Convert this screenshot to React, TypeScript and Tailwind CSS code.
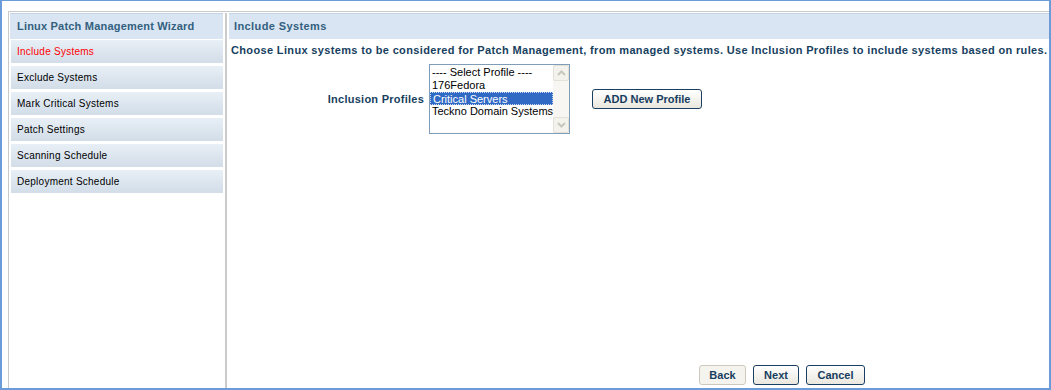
const FONT = { fontFamily: '"Liberation Sans", Arial, sans-serif' };

const STEPS = [
  "Include Systems",
  "Exclude Systems",
  "Mark Critical Systems",
  "Patch Settings",
  "Scanning Schedule",
  "Deployment Schedule",
];

const PROFILES = [
  "---- Select Profile ----",
  "176Fedora",
  "Critical Servers",
  "Teckno Domain Systems",
];

const Arrow = ({ up }: { up?: boolean }) => (
  <div className="flex h-[16px] w-[16px] items-center justify-center rounded-[2px] border border-[#e3e1d8] bg-[#f3f2ec]">
    <svg width="9" height="6" viewBox="0 0 9 6">
      <path
        d={up ? "M1 5 L4.5 1.5 L8 5" : "M1 1 L4.5 4.5 L8 1"}
        fill="none"
        stroke="#c9c7bd"
        strokeWidth="2"
      />
    </svg>
  </div>
);

const WizardButton = ({
  label,
  width,
  muted = false,
}: {
  label: string;
  width: string;
  muted?: boolean;
}) => (
  <button
    className={`flex h-[20px] items-center justify-center rounded-[3px] border text-[11px] font-bold leading-none text-[#163d5e] ${width} ${
      muted
        ? "border-[#cdcabd] bg-[#f4f3ee]"
        : "border-[#1b3f63] bg-gradient-to-b from-white to-[#e9e7de]"
    }`}
  >
    {label}
  </button>
);

const App = () => {
  return (
    <div
      style={FONT}
      className="h-[390px] w-[1051px] border-t border-r-2 border-b-2 border-l-2 border-[#6b9bd8] bg-white pt-[10px] pl-[6px]"
    >
      <div className="flex h-full border-t border-l border-[#c9c9c9] pt-[1px] pl-[1px]">
        {/* wizard steps */}
        <aside className="flex w-[213px] flex-col">
          <div className="flex h-[26px] items-center border-t border-[#c3d3e5] bg-[#d9e5f2] pl-[7px] text-[11px] font-bold tracking-[0.2px] text-[#33607f]">
            Linux Patch Management Wizard
          </div>
          <div className="mt-[1px] flex flex-col gap-[3px]">
            {STEPS.map((step, i) => (
              <div
                key={step}
                className={`ml-[1px] flex h-[23px] items-center bg-gradient-to-b from-[#e8eff6] to-[#d2dde8] pl-[6px] text-[10px] tracking-[0.25px] ${
                  i === 0 ? "text-[#ff0000]" : "text-black"
                }`}
              >
                {step}
              </div>
            ))}
          </div>
        </aside>

        <div className="ml-[2px] w-[2px] bg-[#cbcbcb]" />

        {/* content */}
        <main className="ml-[2px] flex flex-1 flex-col">
          <div className="flex h-[26px] items-center border-t border-[#c3d3e5] bg-[#d9e5f2] pl-[5px] text-[11px] font-bold tracking-[0.4px] text-[#33607f]">
            Include Systems
          </div>
          <p className="mt-[4px] pl-[2px] text-[11px] leading-[14px] font-bold tracking-[0.35px] whitespace-nowrap text-[#173f5f]">
            Choose Linux systems to be considered for Patch Management, from
            managed systems. Use Inclusion Profiles to include systems based on
            rules.
          </p>

          <div className="mt-[7px] flex items-center">
            <label className="w-[195px] text-right text-[11px] font-bold tracking-[0.25px] text-[#173f5f]">
              Inclusion Profiles
            </label>
            <div className="ml-[5px] flex h-[70px] w-[141px] border border-[#7f9db9] bg-white">
              <ul className="min-w-0 flex-1 pt-[1px]">
                {PROFILES.map((p, i) => (
                  <li
                    key={p}
                    className={`h-[13px] overflow-hidden pl-[2px] text-[11px] leading-[13px] whitespace-nowrap ${
                      i === 2
                        ? "border border-dotted border-[#c9d8ef] bg-[#316ac5] pl-[1px] leading-[11px] text-white"
                        : "text-black"
                    }`}
                  >
                    {p}
                  </li>
                ))}
              </ul>
              <div className="flex w-[16px] flex-col justify-between bg-[#f7f6f2]">
                <Arrow up />
                <Arrow />
              </div>
            </div>
            <div className="ml-[22px]">
              <WizardButton label="ADD New Profile" width="w-[110px]" />
            </div>
          </div>

          <div className="flex-1" />

          <div className="mb-[3px] flex gap-[7px] pl-[470px]">
            <WizardButton label="Back" width="w-[47px]" muted />
            <WizardButton label="Next" width="w-[46px]" />
            <WizardButton label="Cancel" width="w-[59px]" />
          </div>
        </main>
      </div>
    </div>
  );
};

export default App;
